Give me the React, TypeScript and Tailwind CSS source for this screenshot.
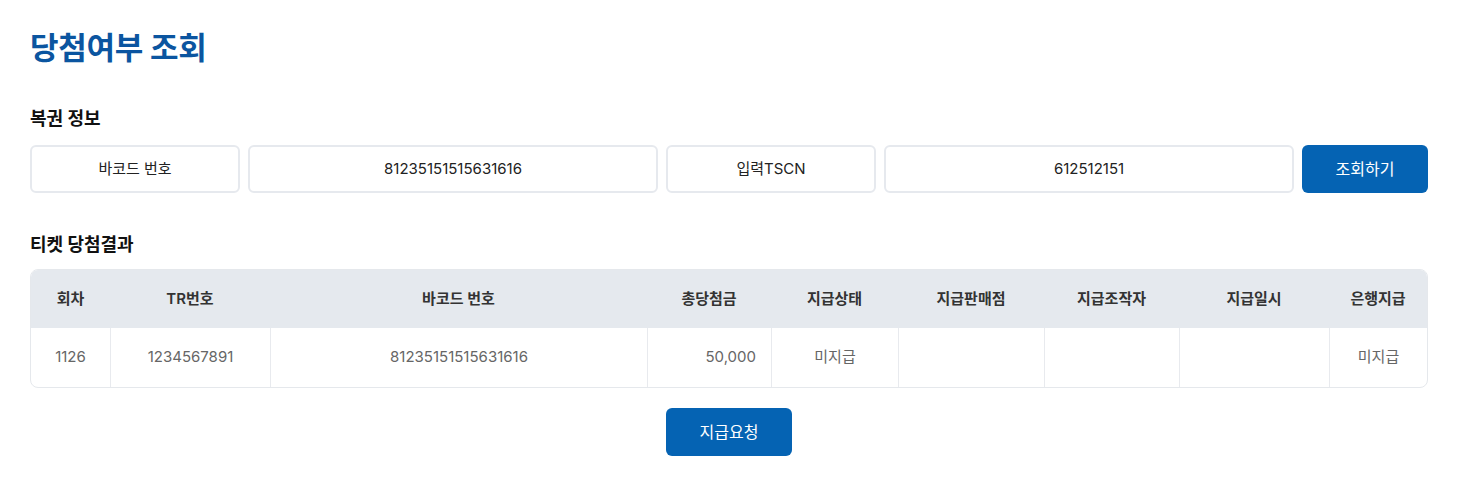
import { useState } from "react";

const columns = [
    { label: "회차", width: "w-[79px]" },
    { label: "TR번호", width: "w-[160px]" },
    { label: "바코드 번호", width: "w-[377px]" },
    { label: "총당첨금", width: "w-[124px]" },
    { label: "지급상태", width: "w-[127px]" },
    { label: "지급판매점", width: "w-[146px]" },
    { label: "지급조작자", width: "w-[135px]" },
    { label: "지급일시", width: "w-[150px]" },
    { label: "은행지급", width: "flex-1" },
];

const row = ["1126", "1234567891", "81235151515631616", "50,000", "미지급", "", "", "", "미지급"];

function App() {
    const [barcode] = useState("81235151515631616");
    const [tscn] = useState("612512151");

    return (
        <div className="min-h-screen bg-white p-[30px] text-[#222] font-['Inter','Noto_Sans_CJK_KR',sans-serif]">
            <h1 className="text-[31px] leading-[36px] font-bold text-[#0b55a0] tracking-[-0.3px]">당첨여부 조회</h1>

            <h2 className="mt-[39px] text-lg leading-7 font-bold text-[#111]">복권 정보</h2>
            <div className="mt-3 flex gap-2 h-12">
                <div className="w-[210px] flex items-center justify-center border-2 border-[#e6e9ee] rounded-md text-[15px]">바코드 번호</div>
                <div className="flex-1 flex items-center justify-center border-2 border-[#e6e9ee] rounded-md text-[15px]">{barcode}</div>
                <div className="w-[210px] flex items-center justify-center border-2 border-[#e6e9ee] rounded-md text-[15px]">입력TSCN</div>
                <div className="flex-1 flex items-center justify-center border-2 border-[#e6e9ee] rounded-md text-[15px]">{tscn}</div>
                <button className="w-[126px] bg-[#0563b3] text-white rounded-md text-base">조회하기</button>
            </div>

            <h2 className="mt-[38px] text-lg leading-7 font-bold text-[#111]">티켓 당첨결과</h2>
            <div className="mt-[10px] border border-[#e5e8ec] rounded-lg overflow-hidden">
                <div className="flex h-[58px] bg-[#e5e9ee]">
                    {columns.map((c) => (
                        <div key={c.label} className={`${c.width} flex items-center justify-center text-[15px] font-semibold text-[#333]`}>{c.label}</div>
                    ))}
                </div>
                <div className="flex h-[59px]">
                    {columns.map((c, i) => (
                        <div
                            key={c.label}
                            className={`${c.width} flex items-center ${i === 3 ? "justify-end pr-[15px]" : "justify-center"} ${i > 0 ? "border-l border-[#e8eaee]" : ""} text-[15px] text-[#666]`}
                        >
                            {row[i]}
                        </div>
                    ))}
                </div>
            </div>

            <div className="mt-5 flex justify-center">
                <button className="w-[126px] h-12 bg-[#0563b3] text-white rounded-md text-base">지급요청</button>
            </div>
        </div>
    );
}

export default App;
